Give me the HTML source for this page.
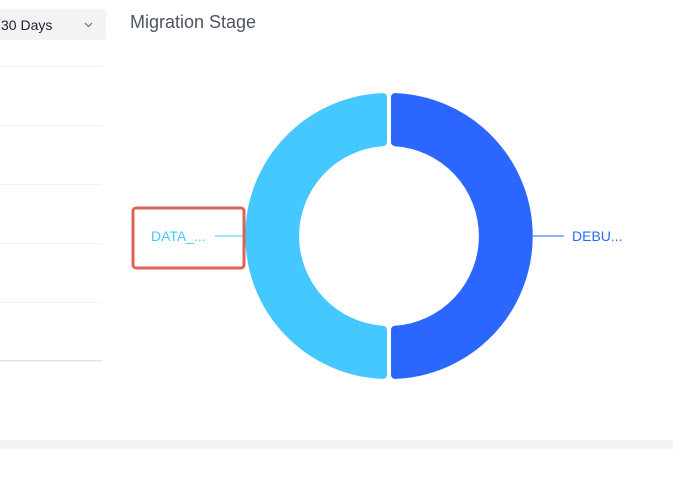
<!DOCTYPE html>
<html><head><meta charset="utf-8"><style>
html,body{margin:0;padding:0;background:#fff;width:673px;height:494px;overflow:hidden;font-family:"Liberation Sans",sans-serif}
</style></head><body>
<svg width="673" height="494" viewBox="0 0 673 494" xmlns="http://www.w3.org/2000/svg" style="position:absolute;left:0;top:0">
<rect x="-4" y="9" width="110" height="31" rx="3" fill="#f2f3f5"/>
<text x="1" y="30" font-size="14" fill="#1f2329" font-family="Liberation Sans">30 Days</text>
<path d="M85 23l3.5 3.5 3.5-3.5" stroke="#6b7078" stroke-width="1.2" fill="none"/>
<text x="130" y="28" font-size="18" fill="#4e5562" font-family="Liberation Sans">Migration Stage</text>
<g fill="#f0f1f3">
<rect x="0" y="66" width="102" height="1"/>
<rect x="0" y="125" width="102" height="1"/>
<rect x="0" y="184" width="102" height="1"/>
<rect x="0" y="243" width="102" height="1"/>
<rect x="0" y="302" width="102" height="1"/>
</g>
<rect x="0" y="360" width="102" height="1.5" fill="#e4e5e8"/>
<path d="M383 97.1 A139 139 0 0 0 383 374.9 L383 329.8 A94 94 0 0 1 383 142.2 Z" fill="#45c8ff" stroke="#45c8ff" stroke-width="8" stroke-linejoin="round"/>
<path d="M395 97.1 A139 139 0 0 1 395 374.9 L395 329.8 A94 94 0 0 0 395 142.2 Z" fill="#2b66ff" stroke="#2b66ff" stroke-width="8" stroke-linejoin="round"/>
<line x1="215" y1="236" x2="246" y2="236" stroke="#45c8ff" stroke-width="1"/>
<line x1="533" y1="236" x2="564" y2="236" stroke="#2b66ff" stroke-width="1"/>
<text x="151" y="241" font-size="14" fill="#45c8ff" font-family="Liberation Sans">DATA_...</text>
<text x="572" y="241" font-size="14" fill="#2b66ff" font-family="Liberation Sans">DEBU...</text>
<rect x="133" y="208" width="111" height="60" rx="3" fill="none" stroke="#e0605a" stroke-width="3"/>
<rect x="0" y="440" width="673" height="9" fill="#f2f3f5"/>
</svg>
</body></html>
